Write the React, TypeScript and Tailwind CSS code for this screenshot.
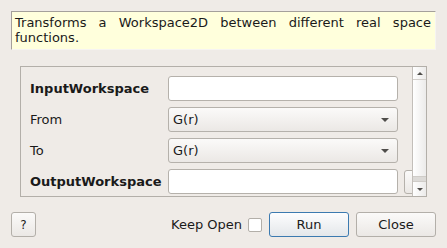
import React from 'react';

const rows = [
    { label: 'InputWorkspace', bold: true, kind: 'text' as const },
    { label: 'From', bold: false, kind: 'combo' as const, value: 'G(r)' },
    { label: 'To', bold: false, kind: 'combo' as const, value: 'G(r)' },
    { label: 'OutputWorkspace', bold: true, kind: 'text' as const, extra: true },
];

/* little dark triangle used by combos and the scrollbar */
const Arrow = ({ up = false, w = 8, h = 4 }: { up?: boolean; w?: number; h?: number }) => (
    <svg width={w} height={h} viewBox={`0 0 ${w} ${h}`} className="block">
        <polygon points={up ? `0,${h} ${w},${h} ${w / 2},0` : `0,0 ${w},0 ${w / 2},${h}`} fill="#4f4d4a" />
    </svg>
);

export default function App() {
    return (
        <div className="w-[447px] h-[248px] bg-[#efebe7] text-[13px] text-[#1a1a1a] overflow-hidden px-[11px] pt-[11px]"
            style={{ fontFamily: '"DejaVu Sans", sans-serif' }}>
            {/* Description */}
            <div className="h-[39px] bg-[#ffffdc] border-t border-l border-[#a4a09b] border-r border-r-[#f6f4f2] border-b border-b-[#f6f4f2] pl-[3px] pr-[4px] pt-[3px] leading-[15px] text-justify">
                Transforms a Workspace2D between different real space functions.
            </div>

            {/* Properties scroll area */}
            <div className="mt-[16px] mx-[9px] h-[131px] border border-[#b3afa9] flex overflow-hidden">
                <div className="flex-1 overflow-hidden pt-[9px] flex flex-col gap-[6px]">
                    {rows.map(r => (
                        <div key={r.label} className="flex items-center h-[25px] shrink-0">
                            <span className={`w-[147px] pl-[9px] shrink-0 ${r.bold ? 'font-bold' : ''}`}>{r.label}</span>
                            {r.kind === 'text' ? (
                                <div className="w-[230px] h-[25px] shrink-0 bg-white border border-[#b5b1ab] rounded-[3px]" />
                            ) : (
                                <div className="w-[230px] h-[25px] shrink-0 border border-[#b5b1ab] rounded-[3px] bg-gradient-to-b from-[#fbfaf9] to-[#ebe8e5] flex items-center justify-between pl-[4px] pr-[8px]">
                                    <span>{r.value}</span>
                                    <Arrow w={8} h={4} />
                                </div>
                            )}
                            {r.extra && (
                                <div className="ml-[6px] w-[30px] h-[24px] shrink-0 border border-[#b5b1ab] rounded-[3px] bg-gradient-to-b from-[#fbfaf9] to-[#ebe8e5]" />
                            )}
                        </div>
                    ))}
                </div>
                {/* Scrollbar */}
                <div className="w-[14px] shrink-0 border-l border-[#c3bfba] flex flex-col bg-gradient-to-r from-[#ffffff] to-[#ecebea]">
                    <div className="h-[13px] border-b border-[#d2cfcb] flex items-center justify-center">
                        <Arrow up w={6} h={3} />
                    </div>
                    <div className="flex-1" />
                    <div className="h-[6px] bg-[#dcdad7] border-y border-[#cfccc8]" />
                    <div className="h-[14px] flex items-center justify-center">
                        <Arrow w={6} h={3} />
                    </div>
                </div>
            </div>

            {/* Buttons */}
            <div className="mt-[15px] flex items-center h-[25px]">
                <button className="w-[25px] h-[25px] border border-[#b3afa9] rounded-[3px] bg-gradient-to-b from-[#fbfaf9] to-[#ebe8e5] text-[12px]">?</button>
                <span className="ml-auto">Keep Open</span>
                <div className="ml-[6px] w-[14px] h-[14px] bg-white border border-[#b3afa9] rounded-[2px]" />
                <button className="ml-[7px] w-[80px] h-[25px] border border-[#3c7ab0] rounded-[3px] bg-gradient-to-b from-[#fdfdfe] to-[#e4e7ea]">Run</button>
                <button className="ml-[7px] w-[80px] h-[25px] border border-[#b3afa9] rounded-[3px] bg-gradient-to-b from-[#fbfaf9] to-[#ebe8e5]">Close</button>
            </div>
        </div>
    );
}
